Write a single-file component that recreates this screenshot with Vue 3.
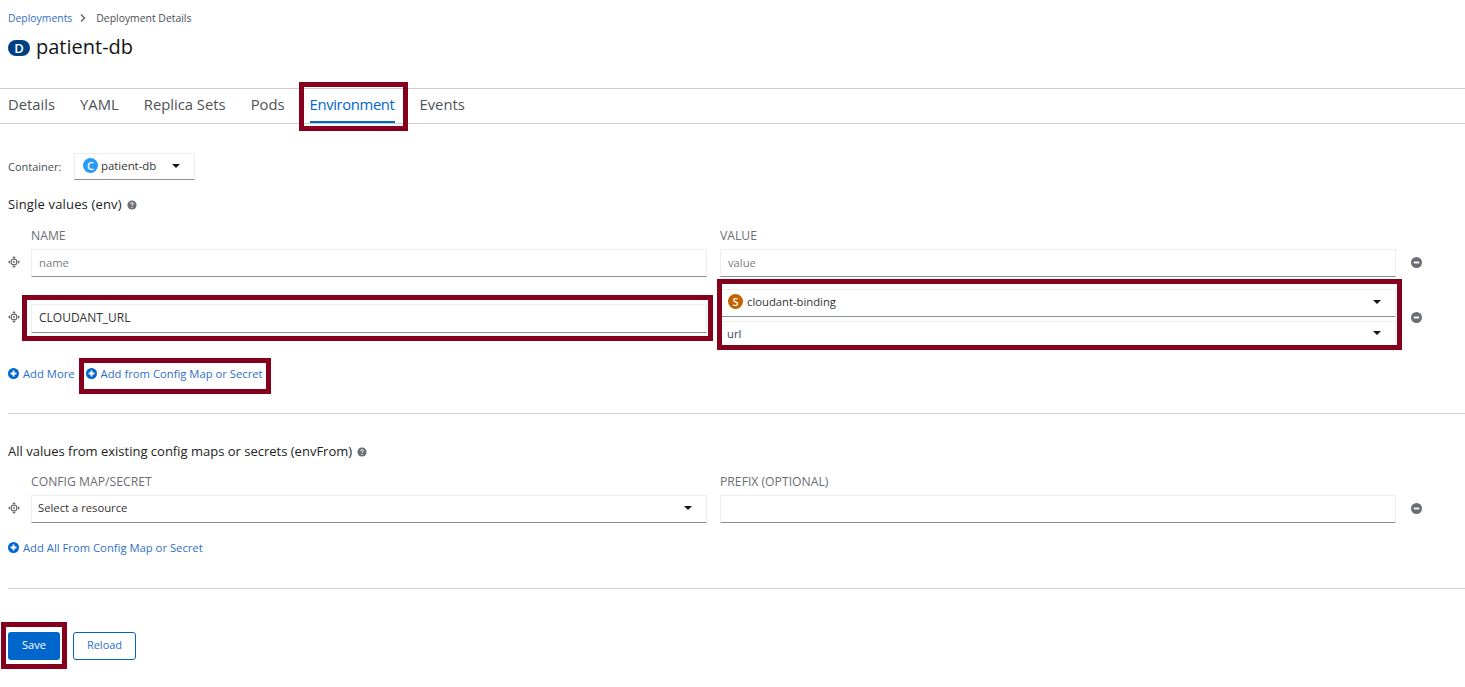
<script setup>
const tabs = ['Details', 'YAML', 'Replica Sets', 'Pods', 'Environment', 'Events']
const marks = [
  { k: 'tab', s: 'left:299px;top:82px;width:109px;height:49px' },
  { k: 'name', s: 'left:22px;top:295px;width:691px;height:46px' },
  { k: 'val', s: 'left:717px;top:279px;width:685px;height:71px' },
  { k: 'add', s: 'left:79px;top:358px;width:192px;height:36px' },
  { k: 'save', s: 'left:1px;top:622px;width:66px;height:47px' }
]
</script>

<template>
  <div class="page">
    <div class="head">
      <nav class="crumbs">
        <a class="link">Deployments</a>
        <svg class="chev" viewBox="0 0 8 10"><path d="M2 1.5 5.5 5 2 8.5" fill="none" stroke="#6a6e73" stroke-width="1.6"/></svg>
        <span>Deployment Details</span>
      </nav>
      <h1 class="title"><span class="badge dep">D</span>patient-db</h1>
    </div>

    <ul class="tabs">
      <li v-for="t in tabs" :key="t" :class="{ active: t === 'Environment' }">{{ t }}</li>
    </ul>

    <div class="body">
      <div class="container-row">
        <span class="muted">Container:</span>
        <div class="dd">
          <span class="badge c">C</span><span>patient-db</span>
          <i class="caret"></i>
        </div>
      </div>

      <h3 class="sec first">Single values (env)
        <svg class="help" viewBox="0 0 12 12"><circle cx="6" cy="6" r="5.5" fill="#6a6e73"/><path d="M4.4 4.7c0-1 .7-1.5 1.6-1.5s1.6.5 1.6 1.4c0 1.2-1.6 1.2-1.6 2.3" fill="none" stroke="#fff" stroke-width="1.2"/><circle cx="6" cy="8.8" r=".8" fill="#fff"/></svg>
      </h3>

      <div class="grid labels"><span>NAME</span><span>VALUE</span></div>

      <div class="grid row r1">
        <svg class="drag" viewBox="0 0 12 12"><use href="#move"/></svg>
        <div class="field ph">name</div>
        <div class="field ph">value</div>
        <svg class="minus" viewBox="0 0 12 12"><circle cx="6" cy="6" r="6" fill="#6a6e73"/><rect x="3" y="5" width="6" height="2" fill="#fff"/></svg>
      </div>

      <div class="grid row r2">
        <svg class="drag" viewBox="0 0 12 12"><use href="#move"/></svg>
        <div class="field name">CLOUDANT_URL</div>
        <div class="stack">
          <div class="field sel"><span class="badge s">S</span>cloudant-binding<i class="caret"></i></div>
          <div class="field sel key">url<i class="caret"></i></div>
        </div>
        <svg class="minus" viewBox="0 0 12 12"><circle cx="6" cy="6" r="6" fill="#6a6e73"/><rect x="3" y="5" width="6" height="2" fill="#fff"/></svg>
      </div>

      <div class="adds">
        <a class="link add"><svg class="plus" viewBox="0 0 12 12"><circle cx="6" cy="6" r="6" fill="#0066cc"/><path d="M6 2.8v6.4M2.8 6h6.4" stroke="#fff" stroke-width="2"/></svg>Add More</a>
        <a class="link add"><svg class="plus" viewBox="0 0 12 12"><circle cx="6" cy="6" r="6" fill="#0066cc"/><path d="M6 2.8v6.4M2.8 6h6.4" stroke="#fff" stroke-width="2"/></svg>Add from Config Map or Secret</a>
      </div>
    </div>

    <hr class="rule one" />

    <div class="body">
      <h3 class="sec">All values from existing config maps or secrets (envFrom)
        <svg class="help" viewBox="0 0 12 12"><circle cx="6" cy="6" r="5.5" fill="#6a6e73"/><path d="M4.4 4.7c0-1 .7-1.5 1.6-1.5s1.6.5 1.6 1.4c0 1.2-1.6 1.2-1.6 2.3" fill="none" stroke="#fff" stroke-width="1.2"/><circle cx="6" cy="8.8" r=".8" fill="#fff"/></svg>
      </h3>
      <div class="grid labels l2"><span>CONFIG MAP/SECRET</span><span>PREFIX (OPTIONAL)</span></div>
      <div class="grid row r1">
        <svg class="drag" viewBox="0 0 12 12"><use href="#move"/></svg>
        <div class="field sel res">Select a resource<i class="caret"></i></div>
        <div class="field"></div>
        <svg class="minus" viewBox="0 0 12 12"><circle cx="6" cy="6" r="6" fill="#6a6e73"/><rect x="3" y="5" width="6" height="2" fill="#fff"/></svg>
      </div>
      <div class="adds a2">
        <a class="link add"><svg class="plus" viewBox="0 0 12 12"><circle cx="6" cy="6" r="6" fill="#0066cc"/><path d="M6 2.8v6.4M2.8 6h6.4" stroke="#fff" stroke-width="2"/></svg>Add All From Config Map or Secret</a>
      </div>
    </div>

    <hr class="rule two" />

    <div class="actions">
      <button class="btn primary">Save</button>
      <button class="btn secondary">Reload</button>
    </div>

    <div v-for="m in marks" :key="m.k" class="mark" :style="m.s"></div>

    <svg width="0" height="0" class="defs">
      <symbol id="move" viewBox="0 0 12 12">
        <path d="M6 0 8 2.2H4ZM6 12 4 9.8h4ZM0 6l2.2-2v4ZM12 6 9.8 8V4Z" fill="#6a6e73"/>
        <rect x="3.4" y="3.4" width="5.2" height="5.2" rx="1.4" fill="none" stroke="#6a6e73" stroke-width="1.2"/>
        <circle cx="6" cy="6" r="1" fill="#6a6e73"/>
      </symbol>
    </svg>
  </div>
</template>

<style>
html, body { margin: 0; background: #fff; }
</style>

<style scoped>
.page {
  position: relative;
  width: 1465px;
  height: 687px;
  overflow: hidden;
  font-family: "Open Sans", "Noto Sans", sans-serif;
  font-size: 12px;
  color: #151515;
}
.defs { position: absolute; }
.head { height: 88px; padding: 11px 8px 0; box-sizing: border-box; }
.crumbs { display: flex; align-items: center; height: 14px; font-size: 10.4px; color: #4a4e53; }
.chev { width: 8px; height: 10px; margin: 0 9px 0 7px; }
.link { color: #2f6fc9; }
.title { display: flex; align-items: center; margin: 9px 0 0; height: 24px; font-size: 20px; font-weight: 400; }
.badge { display: inline-flex; align-items: center; justify-content: center; color: #fff; border-radius: 50%; font-weight: 600; }
.dep { width: 22px; height: 16px; border-radius: 9px; background: #004080; font-size: 13px; margin-right: 6px; margin-top: 4px; }
.tabs {
  display: flex;
  gap: 25px;
  height: 36px;
  margin: 0;
  padding: 0 0 0 8px;
  list-style: none;
  box-sizing: border-box;
  border-top: 1px solid #ccc;
  border-bottom: 1px solid #ccc;
  font-size: 14.8px;
  line-height: 31px;
  color: #4f5255;
}
.tabs li { height: 34px; box-sizing: border-box; }
.tabs .active { color: #06c; border-bottom: 2px solid #06c; letter-spacing: -0.35px; }
.body { padding: 0 0 0 8px; }
.container-row { display: flex; align-items: center; margin-top: 29px; height: 27px; font-size: 11px; }
.muted { color: #4a4e53; width: 66px; }
.dd {
  display: flex;
  align-items: center;
  width: 121px;
  height: 27px;
  box-sizing: border-box;
  padding: 0 0 2px 8px;
  border: 1px solid #eee;
  border-bottom-color: #8a8d90;
  color: #333;
  font-size: 11.4px;
}
.c { width: 15px; height: 15px; background: #2b9af3; font-size: 11px; margin-right: 3px; }
.caret {
  width: 0;
  height: 0;
  margin-left: auto;
  margin-right: 14px;
  border: 4px solid transparent;
  border-top: 4px solid #151515;
  border-bottom: 0;
}
.sec { display: flex; align-items: center; margin: 0; font-size: 13px; font-weight: 400; color: #222; height: 16px; }
.sec.first { margin-top: 16px; letter-spacing: 0.16px; }
.help { width: 10px; height: 10px; margin-left: 5px; margin-top: 1px; }
.grid { display: grid; grid-template-columns: 23px 676px 689px 1fr; column-gap: 0; }
.labels { margin-top: 16px; height: 16px; font-size: 12.2px; color: #6a6e73; line-height: 16px; }
.labels span:first-child { grid-column: 2; }
.labels span:last-child { grid-column: 3; margin-left: 13px; }
.l2 { margin-top: 15px; }
.row { align-items: center; }
.r1 { margin-top: 5px; height: 28px; }
.r2 { margin-top: 11px; height: 60px; }
.drag { width: 12px; height: 12px; margin-bottom: 2px; }
.field {
  display: flex;
  align-items: center;
  height: 28px;
  box-sizing: border-box;
  padding: 0 0 2px 7px;
  border: 1px solid #eee;
  border-bottom-color: #8a8d90;
  font-size: 11.25px;
  color: #333;
}
.row > .field + .field { margin-left: 13px; }
.ph { color: #7a7e83; }
.name { height: 29px; font-size: 12px; }
.stack { display: flex; flex-direction: column; gap: 4px; margin-left: 13px; }
.sel.key { height: 27px; padding-left: 6px; color: #3b3f63; border-bottom-color: #eee; }
.s { width: 15px; height: 15px; background: #c46100; font-size: 11px; margin-right: 4px; }
.res { padding: 0 0 3px 6px; }
.minus { width: 11px; height: 11px; margin: 0 0 2px 15px; }
.adds { display: flex; gap: 11px; margin-top: 18px; height: 14px; align-items: center; font-size: 11.25px; }
.a2 { margin-top: 17px; }
.add { display: flex; align-items: center; }
.plus { width: 11px; height: 11px; margin-right: 4px; }
.rule { border: 0; border-top: 1px solid #d2d2d2; margin: 0 0 0 8px; }
.rule.one { margin-top: 33px; margin-bottom: 29px; }
.rule.two { margin-top: 34px; }
.actions { display: flex; gap: 13px; margin: 43px 0 0 8px; }
.btn { height: 28px; box-sizing: border-box; border-radius: 3px; font: inherit; font-size: 11px; padding: 0 0 3px; }
.primary { width: 52px; background: #06c; border: 0; color: #fff; }
.secondary { width: 63px; background: #fff; border: 1px solid #06c; color: #2f6fc9; }
.mark { position: absolute; box-sizing: border-box; border: 5px solid #85001c; pointer-events: none; }
</style>
